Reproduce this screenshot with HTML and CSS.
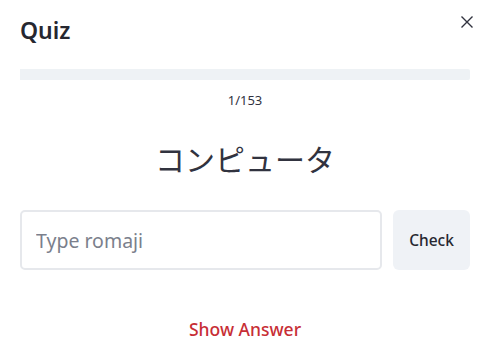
FILE: index.html
```html
<!DOCTYPE html>
<html lang="ja">
<head>
    <meta charset="UTF-8">
    <title>Quiz</title>
    <link rel="stylesheet" href="styles.css">
</head>
<body>

<div class="dialog">
    <div class="header">
        <h1>Quiz</h1>
        <button class="close" aria-label="Close">
            <svg width="14" height="14" viewBox="0 0 14 14">
                <path d="M1.5 1.5 L12.5 12.5 M12.5 1.5 L1.5 12.5" stroke="#31333f" stroke-width="1.4" fill="none"/>
            </svg>
        </button>
    </div>

    <div class="progress"><div class="progress-fill" style="width: 0.65%"></div></div>
    <p class="count">1/153</p>

    <p class="word">コンピュータ</p>

    <div class="answer-row">
        <input type="text" class="answer" placeholder="Type romaji">
        <button class="check">Check</button>
    </div>

    <div class="reveal">
        <button class="show">Show Answer</button>
    </div>
</div>

</body>
</html>
```

FILE: styles.css
```css
body {
    margin: 0;
    background: #ffffff;
    font-family: "Noto Sans", "Noto Sans CJK JP", sans-serif;
    color: #31333f;
}
.dialog {
    padding: 0 20px;
}
.header {
    display: flex;
    justify-content: space-between;
    align-items: flex-start;
    height: 69px;
}
.header h1 {
    margin: 14px 0 0;
    font-size: 23px;
    font-weight: 600;
    line-height: 32px;
    color: #262730;
}
.close {
    background: none;
    border: none;
    padding: 0;
    margin: 15px -4px 0 0;
    cursor: pointer;
}
.progress {
    height: 11px;
    background: #eef2f5;
    border-radius: 2px;
}
.progress-fill {
    height: 100%;
    background: #eef2f5;
}
.count {
    margin: 11px 0 0;
    text-align: center;
    font-size: 13px;
    line-height: 18px;
}
.word {
    margin: 29px 0 0;
    text-align: center;
    font-family: "Noto Sans CJK JP", sans-serif;
    font-size: 30px;
    line-height: 40px;
    font-weight: 400;
}
.answer-row {
    display: flex;
    gap: 11px;
    margin-top: 32px;
    height: 60px;
}
.answer {
    flex: 1;
    box-sizing: border-box;
    height: 60px;
    border: 2px solid #e6e8ec;
    border-radius: 5px;
    padding: 0 14px;
    font-family: inherit;
    font-size: 19.5px;
    color: #31333f;
    outline: none;
}
.answer::placeholder {
    color: #7b7f8c;
}
.check {
    width: 77px;
    border: none;
    border-radius: 6px;
    background: #eff2f6;
    font-family: inherit;
    font-size: 15.5px;
    font-weight: 500;
    color: #262730;
    cursor: pointer;
}
.reveal {
    text-align: center;
    margin-top: 47px;
}
.show {
    background: none;
    border: none;
    padding: 0;
    font-family: inherit;
    font-size: 17.5px;
    font-weight: 500;
    color: #c72e35;
    cursor: pointer;
}
```
